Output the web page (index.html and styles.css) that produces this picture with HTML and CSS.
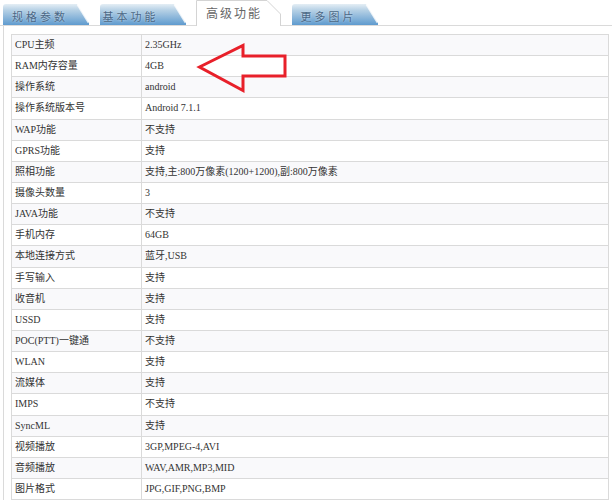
FILE: index.html
```html
<!DOCTYPE html>
<html>
<head>
<meta charset="utf-8">
<link rel="stylesheet" href="styles.css">
</head>
<body>
<div class="page">
  <div class="tabs">
    <div class="tab">
      <svg class="tab-shape" width="86" height="21" viewBox="0 0 86 21"><defs><linearGradient id="g1" x1="0" y1="0" x2="0" y2="1"><stop offset="0" stop-color="#e4eef5"/><stop offset="0.3" stop-color="#b5d0e5"/><stop offset="1" stop-color="#5f9bcf"/></linearGradient></defs><path d="M0 21 V3 Q0 0 3 0 H74 L86 19 V21 Z" fill="url(#g1)"/><path d="M74.5 0.5 L85.5 18.5" stroke="#ffffff" stroke-width="2" opacity="0.8"/></svg>
      <span class="tab-label">规格参数</span>
    </div>
    <div class="tab">
      <svg class="tab-shape" width="86" height="21" viewBox="0 0 86 21"><defs><linearGradient id="g2" x1="0" y1="0" x2="0" y2="1"><stop offset="0" stop-color="#e4eef5"/><stop offset="0.3" stop-color="#b5d0e5"/><stop offset="1" stop-color="#5f9bcf"/></linearGradient></defs><path d="M0 21 V3 Q0 0 3 0 H74 L86 19 V21 Z" fill="url(#g2)"/><path d="M74.5 0.5 L85.5 18.5" stroke="#ffffff" stroke-width="2" opacity="0.8"/></svg>
      <span class="tab-label tab-label-narrow">基本功能</span>
    </div>
    <div class="tab tab-active">
      <svg class="tab-shape" width="85" height="26" viewBox="0 0 85 26"><path d="M0.5 26 V0.5 H71 L84.5 14 V26" fill="#ffffff" stroke="#d4d4d4" stroke-width="1"/></svg>
      <span class="tab-label tab-label-active">高级功能</span>
    </div>
    <div class="tab">
      <svg class="tab-shape" width="86" height="21" viewBox="0 0 86 21"><defs><linearGradient id="g4" x1="0" y1="0" x2="0" y2="1"><stop offset="0" stop-color="#e4eef5"/><stop offset="0.3" stop-color="#b5d0e5"/><stop offset="1" stop-color="#5f9bcf"/></linearGradient></defs><path d="M0 21 V3 Q0 0 3 0 H74 L86 19 V21 Z" fill="url(#g4)"/><path d="M74.5 0.5 L85.5 18.5" stroke="#ffffff" stroke-width="2" opacity="0.8"/></svg>
      <span class="tab-label">更多图片</span>
    </div>
  </div>
  <div class="panel">
    <table class="spec">
      <tr><td class="k">CPU主频</td><td class="v">2.35GHz</td></tr>
      <tr><td class="k">RAM内存容量</td><td class="v">4GB</td></tr>
      <tr><td class="k">操作系统</td><td class="v">android</td></tr>
      <tr><td class="k">操作系统版本号</td><td class="v">Android 7.1.1</td></tr>
      <tr><td class="k">WAP功能</td><td class="v">不支持</td></tr>
      <tr><td class="k">GPRS功能</td><td class="v">支持</td></tr>
      <tr><td class="k">照相功能</td><td class="v">支持,主:800万像素(1200+1200),副:800万像素</td></tr>
      <tr><td class="k">摄像头数量</td><td class="v">3</td></tr>
      <tr><td class="k">JAVA功能</td><td class="v">不支持</td></tr>
      <tr><td class="k">手机内存</td><td class="v">64GB</td></tr>
      <tr><td class="k">本地连接方式</td><td class="v">蓝牙,USB</td></tr>
      <tr><td class="k">手写输入</td><td class="v">支持</td></tr>
      <tr><td class="k">收音机</td><td class="v">支持</td></tr>
      <tr><td class="k">USSD</td><td class="v">支持</td></tr>
      <tr><td class="k">POC(PTT)一键通</td><td class="v">不支持</td></tr>
      <tr><td class="k">WLAN</td><td class="v">支持</td></tr>
      <tr><td class="k">流媒体</td><td class="v">支持</td></tr>
      <tr><td class="k">IMPS</td><td class="v">不支持</td></tr>
      <tr><td class="k">SyncML</td><td class="v">支持</td></tr>
      <tr><td class="k">视频播放</td><td class="v">3GP,MPEG-4,AVI</td></tr>
      <tr><td class="k">音频播放</td><td class="v">WAV,AMR,MP3,MID</td></tr>
      <tr><td class="k">图片格式</td><td class="v">JPG,GIF,PNG,BMP</td></tr>
    </table>
    <svg class="arrow" width="96" height="56" viewBox="0 0 96 56"><path d="M3.5 26 L47 4.5 V15 H89 V35 H47 V49.5 Z" fill="none" stroke="#e8202a" stroke-width="3" stroke-linejoin="miter"/></svg>
  </div>
</div>
</body>
</html>
```
FILE: styles.css
```css
html, body {
  margin: 0;
  padding: 0;
  background: #ffffff;
}
.page {
  width: 612px;
  height: 500px;
  overflow: hidden;
  font-family: "Liberation Serif", "Noto Sans CJK SC", serif;
  color: #333333;
}
.tabs {
  display: flex;
  align-items: flex-end;
  gap: 10.5px;
  height: 25px;
  padding-left: 3px;
  border-bottom: 1px solid #dadada;
}
.tab {
  display: grid;
  align-items: center;
}
.tab > * {
  grid-area: 1 / 1;
}
.tab-shape {
  display: block;
}
.tab-label {
  font-family: "Noto Sans CJK SC", sans-serif;
  font-size: 11px;
  letter-spacing: 3px;
  line-height: 11px;
  color: #4a6785;
  padding-left: 9px;
  padding-top: 3px;
  text-shadow: 0 0 2px rgba(255,255,255,0.6);
}
.tab-label-narrow {
  padding-left: 3px;
}
.tab-active {
  margin-bottom: -1px;
}
.tab-label-active {
  color: #666666;
  font-size: 12px;
  letter-spacing: 2px;
  padding-left: 10px;
  padding-top: 0;
  margin-top: -2px;
  text-shadow: none;
}
.panel {
  position: relative;
  margin-left: 3px;
  border-left: 1px solid #dadada;
  padding: 8px 0 0 7px;
}
.spec {
  border-collapse: collapse;
  width: 598px;
  table-layout: fixed;
  font-size: 10px;
}
.spec tr {
  height: 21.15px;
}
.spec tr:nth-child(odd) {
  background: #f9f9fb;
}
.spec td {
  border: 1px solid #dadada;
  padding: 0 0 0 3px;
  line-height: 12px;
  vertical-align: middle;
  white-space: nowrap;
}
.spec .k {
  width: 126px;
}
.arrow {
  position: absolute;
  left: 192px;
  top: 15px;
}
```
